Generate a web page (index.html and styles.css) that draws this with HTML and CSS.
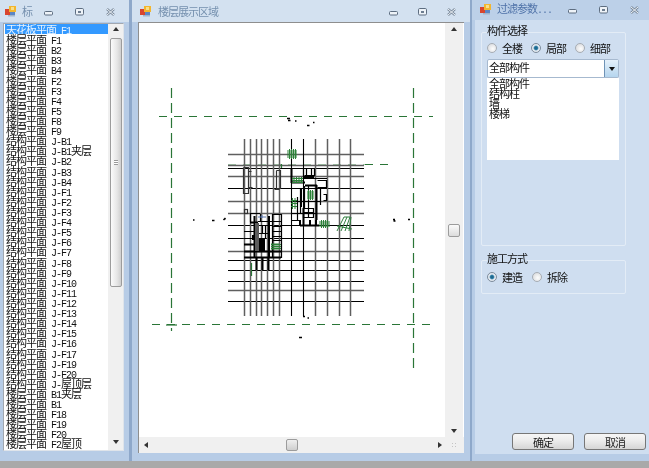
FILE: index.html
```html
<!DOCTYPE html>
<html lang="zh">
<head>
<meta charset="utf-8">
<title>楼层展示区域</title>
<link rel="stylesheet" href="styles.css">
</head>
<body>
<svg class="defs" width="0" height="0">
  <symbol id="logo" viewBox="0 0 11 11">
    <rect x="0" y="3" width="5" height="6" fill="#d8452e"/>
    <rect x="4" y="0" width="7" height="6" fill="#f3b62e"/>
    <rect x="5" y="6" width="5" height="4" fill="#5c86c4"/>
    <rect x="3" y="9" width="7" height="1.5" fill="#9fb4cc"/>
    <rect x="6" y="1" width="3" height="3" fill="#f8de8a"/>
  </symbol>
  <symbol id="min" viewBox="0 0 9 8">
    <rect x=".5" y="3.5" width="8" height="3.5" rx="1" fill="#eef3f8" stroke="#5d6d80"/>
  </symbol>
  <symbol id="max" viewBox="0 0 9 8">
    <rect x=".5" y=".5" width="8" height="6.5" rx="1.2" fill="#eef3f8" stroke="#5d6d80"/>
    <rect x="3" y="3" width="3" height="2" fill="#6d7d90"/>
  </symbol>
  <symbol id="close" viewBox="0 0 9 8">
    <path d="M1 1L8 7M8 1L1 7" stroke="#7b8a9b" stroke-width="2.4"/>
    <path d="M1 1L8 7M8 1L1 7" stroke="#eef3f8" stroke-width="1"/>
  </symbol>
</svg>
<div class="app">
  <div class="panes">
    <section class="pane pane-list">
      <header class="title">
        <svg class="logo"><use href="#logo"/></svg>
        <span class="title-text">标</span>
        <div class="winbtns">
          <svg class="wb"><use href="#min"/></svg><svg class="wb"><use href="#max"/></svg><svg class="wb"><use href="#close"/></svg>
        </div>
      </header>
      <div class="listbox">
        <div class="rows">
          <div class="row sel">天花板平面 <span class="l">F1</span></div>
          <div class="row">楼层平面 <span class="l">F1</span></div>
          <div class="row">楼层平面 <span class="l">B2</span></div>
          <div class="row">楼层平面 <span class="l">B3</span></div>
          <div class="row">楼层平面 <span class="l">B4</span></div>
          <div class="row">楼层平面 <span class="l">F2</span></div>
          <div class="row">楼层平面 <span class="l">F3</span></div>
          <div class="row">楼层平面 <span class="l">F4</span></div>
          <div class="row">楼层平面 <span class="l">F5</span></div>
          <div class="row">楼层平面 <span class="l">F8</span></div>
          <div class="row">楼层平面 <span class="l">F9</span></div>
          <div class="row">结构平面 <span class="l">J-B1</span></div>
          <div class="row">结构平面 <span class="l">J-B1</span>夹层</div>
          <div class="row">结构平面 <span class="l">J-B2</span></div>
          <div class="row">结构平面 <span class="l">J-B3</span></div>
          <div class="row">结构平面 <span class="l">J-B4</span></div>
          <div class="row">结构平面 <span class="l">J-F1</span></div>
          <div class="row">结构平面 <span class="l">J-F2</span></div>
          <div class="row">结构平面 <span class="l">J-F3</span></div>
          <div class="row">结构平面 <span class="l">J-F4</span></div>
          <div class="row">结构平面 <span class="l">J-F5</span></div>
          <div class="row">结构平面 <span class="l">J-F6</span></div>
          <div class="row">结构平面 <span class="l">J-F7</span></div>
          <div class="row">结构平面 <span class="l">J-F8</span></div>
          <div class="row">结构平面 <span class="l">J-F9</span></div>
          <div class="row">结构平面 <span class="l">J-F10</span></div>
          <div class="row">结构平面 <span class="l">J-F11</span></div>
          <div class="row">结构平面 <span class="l">J-F12</span></div>
          <div class="row">结构平面 <span class="l">J-F13</span></div>
          <div class="row">结构平面 <span class="l">J-F14</span></div>
          <div class="row">结构平面 <span class="l">J-F15</span></div>
          <div class="row">结构平面 <span class="l">J-F16</span></div>
          <div class="row">结构平面 <span class="l">J-F17</span></div>
          <div class="row">结构平面 <span class="l">J-F19</span></div>
          <div class="row">结构平面 <span class="l">J-F20</span></div>
          <div class="row">结构平面 <span class="l">J-</span>屋顶层</div>
          <div class="row">楼层平面 <span class="l">B1</span>夹层</div>
          <div class="row">楼层平面 <span class="l">B1</span></div>
          <div class="row">楼层平面 <span class="l">F18</span></div>
          <div class="row">楼层平面 <span class="l">F19</span></div>
          <div class="row">楼层平面 <span class="l">F20</span></div>
          <div class="row">楼层平面 <span class="l">F2</span>屋顶</div>
        </div>
        <div class="vscroll list-scroll">
          <i class="arrow up"></i>
          <div class="thumb list-thumb"><b class="grip"></b></div>
          <i class="arrow down"></i>
        </div>
      </div>
    </section>

    <section class="pane pane-view">
      <header class="title">
        <svg class="logo"><use href="#logo"/></svg>
        <span class="title-text">楼层展示区域</span>
        <div class="winbtns">
          <svg class="wb"><use href="#min"/></svg><svg class="wb"><use href="#max"/></svg><svg class="wb"><use href="#close"/></svg>
        </div>
      </header>
      <div class="viewer">
        <div class="viewer-main">
          <svg class="plan" viewBox="139 23 306 414" width="306" height="414">
            <path class="dash-h" d="M159 116.5H433M152 324.5H433"/>
            <path class="dash-mid" d="M228 164.500H365"/>
            <path class="dash-h" d="M365 164.500H388"/>
            <path class="dash-v" d="M171.500 88V331M413.500 88V373"/>
            <path class="plus" d="M166 325H177"/>
            <path class="gray-line" d="M228 154.500H364M228 165.500H364M228 176.500H364M228 201.500H364M228 213.500H364M228 251.500H364M228 290.500H364"/>
            <path class="black-line" d="M228 168.500H364M228 188.500H364M228 225.500H364M228 238.500H364M228 260.500H364M228 270.500H364M228 281.500H364M228 301.500H364"/>
            <path class="gray-line" d="M244.500 139V316M250.500 139V316M256.500 139V316M261.500 139V316M267.500 139V316M273.500 139V316M279.500 139V316M315.500 139V316M327.500 139V316M339.500 139V316M350.500 139V316"/>
            <path class="black-line" d="M291.500 139V316M303.500 139V316"/>

            <path class="bld-gray" d="M243.500 167.500V193.500H248.500V167.500H243.500M248.500 171.500H251.500M248.500 187.500H252.500M276.500 170.500V188.500H280.500V170.500H276.500M274.500 189.500H279.500"/>
            <rect class="bld-gray" x="244.500" y="209.500" width="3" height="4"/>

            <!-- upper-right block -->
            <path class="bld" d="M303.500 168V178M306.500 168V176M311.500 168V176M314.500 168V176M304.500 175.500H314.500M291 178.500H327M317.500 180.500H326.500V187.500H317.500M300 188.500H327M323.500 194.500H326.500V200.500H323.500M291 201.500H320M300.500 188V213M304.500 186V208M308.500 186V208M291 213.500H317M291 220.500H300M303.500 208.500H313.500V217.500H303.500V208.500M308.500 208V217M303.500 212.500H313.500M297.500 197V221M320.500 188V205"/>
            <path class="bld-heavy" d="M291.500 168V183M291 182.500H305M304 177H314M316.500 185V220M305 185.500H317M300 220V226M300 225.500H319M310 220V226M316 220V226M303.500 208V226M301 189V207"/>

            <!-- lower-left block -->
            <path class="bld" d="M250 213.500H260M272 214.500H281M260.500 214V221M272.500 214V221M258 221.500H281M262.500 225V234M258 225.500H269M258 233.500H269M265.500 225V238M272 226.500H281M272 231.500H281M272 236.500H281M272 240.500H281M281.500 214V258M272.500 221V258M244 231.500H254M244 238.500H254M250.500 214V222"/>
            <path class="bld-heavy" d="M254.500 216V257M269 216V257M244 244.500H254M244 251.500H281M244 257.500H281M256.500 257V270M262.500 257V270M268.500 257V270M250 222.500H258"/>
            <rect class="soft" x="255" y="223" width="4" height="28"/>
            <rect class="solid" x="259" y="238" width="6" height="14"/>
            <rect class="solid" x="252" y="235" width="3" height="5"/>
            <path class="soft-line" d="M262 215V218M258 217H266"/>

            <!-- green hatching -->
            <path class="hatch" d="M289.500 149V159M291.500 149V159M293.500 149V159M295.500 149V159M287 151H297M287 153H297M287 155H297M287 157H297"/>
            <path class="hatch" d="M294 177V183M296.500 177V183M299 177V183M301.500 177V183M292 178.500H303M292 180.500H303M292 182.500H303"/>
            <path class="hatch" d="M308.500 190V200M310.500 190V200M312.500 190V200M307 192H314M307 194H314M307 196H314M307 198H314"/>
            <path class="hatch" d="M292.500 198V209M295 198V209M291 200.500H297M291 203.500H297M291 206.500H297"/>
            <path class="hatch" d="M321.500 220V228M323.500 220V228M325.500 220V228M327.500 220V228M319 222H330M319 224H330M319 226H330"/>
            <path class="hatch" d="M272 243V250M274 243V250M276 243V250M278 243V250M271 244.500H281M271 246.500H281M271 248.500H281"/>
            <path class="stair" d="M337 231L344 217H350L345 231M341 231L347 217M349 231L351 217M337 226L352 229"/>
            <path class="plus" d="M251.500 263V276M281.500 164V168"/>

            <path class="dots" d="M287 118.500h3M288 120.500h2.500M295 121h1.500M307 125.500h2.500M313 122.500h1.500M193 220h1.500M212 220.500h2.500M223.500 220l2-2M224 219h1.500M393 219.500h2M393.500 221h2M408 219.500h2M303 316.500h2M307.500 318h1.500M299 337.500h3"/>
          </svg>
          <div class="vscroll view-scroll">
            <i class="arrow up"></i>
            <div class="thumb view-thumb"></div>
            <i class="arrow down"></i>
          </div>
        </div>
        <div class="viewer-foot">
          <div class="hscroll">
            <i class="arrow left"></i>
            <div class="thumb hthumb"></div>
            <i class="arrow right"></i>
          </div>
          <div class="corner"><i class="corner-grip"></i></div>
        </div>
      </div>
    </section>

    <section class="pane pane-filter">
      <header class="title">
        <svg class="logo"><use href="#logo"/></svg>
        <span class="title-text strong">过滤参数<span class="l">...</span></span>
        <div class="winbtns">
          <svg class="wb"><use href="#min"/></svg><svg class="wb"><use href="#max"/></svg><svg class="wb"><use href="#close"/></svg>
        </div>
      </header>
      <div class="form">
        <fieldset class="group group-parts">
          <legend>构件选择</legend>
          <div class="radios">
            <label class="radio"><i class="dot"></i>全楼</label>
            <label class="radio"><i class="dot on"></i>局部</label>
            <label class="radio"><i class="dot"></i>细部</label>
          </div>
          <div class="combo">
            <span class="combo-value">全部构件</span>
            <span class="combo-btn"><i class="arrow down dark"></i></span>
          </div>
          <div class="combo-list">
            <div class="opt">全部构件</div>
            <div class="opt">结构柱</div>
            <div class="opt">墙</div>
            <div class="opt">楼梯</div>
          </div>
        </fieldset>
        <fieldset class="group group-mode">
          <legend>施工方式</legend>
          <div class="radios">
            <label class="radio"><i class="dot on"></i>建造</label>
            <label class="radio"><i class="dot"></i>拆除</label>
          </div>
        </fieldset>
        <div class="actions">
          <button class="btn">确定</button>
          <button class="btn">取消</button>
        </div>
      </div>
    </section>
  </div>
  <div class="taskbar"></div>
</div>
</body>
</html>
```

FILE: styles.css
```css
* { box-sizing: border-box; }
html, body { margin: 0; padding: 0; background: #a9a9a9; }
body { width: 649px; height: 468px; overflow: hidden; }
.defs { position: absolute; }

.app {
  width: 649px;
  height: 468px;
  display: flex;
  flex-direction: column;
  font-family: "Noto Sans CJK SC", "Liberation Sans", sans-serif;
  font-size: 11px;
  letter-spacing: -1px;
  color: #111;
}
.l { font-family: "Liberation Mono", monospace; font-size: 10px; }
.row .l { margin-left: 3.5px; }
.title, .rows, .form { filter: blur(.3px); }

.panes {
  flex: 1;
  display: flex;
  min-height: 0;
  background: #8ea8ca;
  column-gap: 2px;
}
.taskbar { height: 7px; background: #a9a9a9; }

.pane { display: flex; flex-direction: column; background: #b7cce6; }
.pane-list { width: 129px; padding: 0 5px 10px 3px; }
.pane-view { width: 338px; margin-left: 1px; padding: 0 6px 8px 6px; }
.pane-filter { flex: 1; padding: 0 0 7px 3px; }

.title {
  display: flex;
  align-items: center;
  height: 22px;
  flex: none;
  background: #d3e1f0;
  margin: 0 -6px;
  padding: 0 14px 0 8px;
  color: #7590ae;
  font-size: 11px;
}
.pane-list .title { margin: 0 -5px 1px -3px; padding-left: 5px; }
.pane-filter .title { height: 20px; margin: 0 0 0 -3px; padding: 0 10px 2px 8px; background: #bcd0e8; }
.logo { width: 11px; height: 11px; flex: none; }
.title-text { margin-left: 6px; line-height: 12px; }
.pane-view .title-text { margin-left: 7px; }
.strong { color: #4f72a8; }
.winbtns { margin-left: auto; display: flex; column-gap: 22px; padding-top: 1px; }
.pane-view .winbtns { column-gap: 20px; }
.wb { width: 9px; height: 8px; display: block; }

.listbox {
  flex: 1;
  display: flex;
  min-height: 0;
  background: #fff;
  border: 1px solid #a2a8b0;
  border-right-color: #dfe4ea;
  border-bottom-color: #dfe4ea;
}
.rows { flex: 1; padding: 0 0 0 1px; min-width: 0; }
.row {
  height: 10.12px;
  line-height: 10.12px;
  padding-left: 1px;
  white-space: nowrap;
}
.row.sel { background: #3399ff; color: #e8f3ff; }

.vscroll {
  flex: none;
  display: flex;
  flex-direction: column;
  align-items: center;
  background: #f0f0f0;
}
.list-scroll { width: 15px; padding-top: 3px; }
.view-scroll { width: 18px; padding-top: 4px; }
.thumb {
  background: linear-gradient(90deg, #fbfbfb, #e6e6e6 60%, #cfcfcf);
  border: 1px solid #9c9c9c;
  border-radius: 2px;
}
.list-thumb { width: 12px; height: 249px; margin-top: 7px; display: flex; align-items: center; justify-content: center; }
.grip { width: 4px; height: 5px; border-top: 1px solid #999; border-bottom: 1px solid #999; background: linear-gradient(#fff 40%, #999 40%, #999 60%, #fff 60%); }
.view-thumb { width: 12px; height: 13px; margin-top: 193px; background: linear-gradient(#fbfbfb, #dcdcdc); }

.arrow { display: block; width: 0; height: 0; border-style: solid; border-color: transparent; flex: none; }
.arrow.up { border-width: 0 3.5px 4px; border-bottom-color: #333; }
.arrow.down { border-width: 4px 3.5px 0; border-top-color: #333; }
.arrow.left { border-width: 3.5px 4px 3.5px 0; border-right-color: #333; }
.arrow.right { border-width: 3.5px 0 3.5px 4px; border-left-color: #333; }
.vscroll .arrow.down { margin-top: auto; margin-bottom: 4px; }
.list-scroll .arrow.down { margin-bottom: 6px; }

.viewer {
  flex: 1;
  display: flex;
  flex-direction: column;
  min-height: 0;
  border-top: 1px solid #8e8e8e;
  border-left: 1px solid #8e8e8e;
  background: #fff;
}
.viewer-main { flex: 1; display: flex; min-height: 0; }
.plan { flex: none; display: block; background: #fff; filter: blur(.2px); }
.viewer-foot { display: flex; height: 16px; flex: none; background: #f0f0f0; }
.hscroll { width: 306px; display: flex; align-items: center; padding: 0 3px 0 5px; }
.hthumb { width: 12px; height: 12px; margin-left: 138px; background: linear-gradient(#efefef, #cfcfcf); }
.hscroll .arrow.right { margin-left: auto; }
.corner { flex: 1; display: flex; align-items: center; justify-content: center; }
.corner-grip {
  width: 7px;
  height: 6px;
  background: radial-gradient(circle, #c4c4c4 40%, transparent 45%) 0 0 / 3px 3px;
}

.dash-h { fill: none; stroke: #2a7537; stroke-width: 1.2; stroke-dasharray: 8 7; }
.dash-mid { fill: none; stroke: #a9cfae; stroke-width: 1; stroke-dasharray: 8 7; }
.dash-v { fill: none; stroke: #2a7537; stroke-width: 1.2; stroke-dasharray: 10 5; }
.plus { fill: none; stroke: #2a7537; stroke-width: 1.2; }
.gray-line { fill: none; stroke: #5f5f5f; stroke-width: 1.5; }
.black-line { fill: none; stroke: #000; stroke-width: 1.1; }
.bld { fill: none; stroke: #000; stroke-width: 1.2; }
.bld-heavy { fill: none; stroke: #000; stroke-width: 2; }
.bld-gray { fill: none; stroke: #333; stroke-width: 1.2; }
.solid { fill: #000; }
.soft { fill: #5c5c5c; }
.soft-line { fill: none; stroke: #5d78b0; stroke-width: 1; }
.hatch { fill: none; stroke: #2c8038; stroke-width: 1; }
.stair { fill: none; stroke: #2f7f3e; stroke-width: 1; }
.dots { fill: none; stroke: #000; stroke-width: 1.6; }

.form { flex: 1; display: flex; flex-direction: column; background: #cfdef0; padding: 0 0 0 6px; min-height: 0; }
.group {
  margin: 0;
  width: 145px;
  min-inline-size: 0;
  border: 1px solid #e3ecf6;
  border-radius: 2px;
  padding: 0 6px 0 5px;
}
.group legend { padding: 0; margin-left: 0; height: 14px; line-height: 11px; }
.group-parts { height: 221px; margin-top: 5px; }
.group-mode { height: 41px; margin-top: 7px; }
.radios { display: flex; height: 12px; margin: 3px 0 0 0; }
.group-mode .radios { margin-top: 4px; }
.radio { width: 45px; display: flex; align-items: center; white-space: nowrap; }
.dot {
  width: 10px;
  height: 10px;
  margin-right: 5px;
  border-radius: 50%;
  border: 1px solid #a7adb4;
  background: radial-gradient(circle at 60% 60%, #fdfdfd, #d3d5d8);
  flex: none;
}
.dot.on { background: radial-gradient(circle, #155a7d 0, #2d7da5 30%, #dfe6ee 50%, #eef2f6 100%); border-color: #7d8c9c; }

.combo {
  width: 132px;
  height: 19px;
  margin-top: 5px;
  display: flex;
  align-items: center;
  background: #fff;
  border: 1px solid #a6b9cf;
  border-radius: 2px;
  padding-left: 1px;
}
.combo-value { flex: 1; padding-bottom: 3px; }
.combo-btn {
  width: 14px;
  height: 17px;
  display: flex;
  align-items: center;
  justify-content: center;
  background: linear-gradient(#e4f0fa, #b5d5ee);
  border-left: 1px solid #6f93b6;
}
.arrow.dark { border-width: 4px 3.5px 0; border-top-color: #111; }
.combo-list { width: 132px; height: 82px; background: #fff; padding-left: 2px; }
.opt { height: 10px; line-height: 10px; }

.actions { margin-top: auto; display: flex; justify-content: flex-end; column-gap: 10px; padding: 0 3px 4px 0; }
.btn {
  width: 62px;
  height: 17px;
  padding: 0 0 1px;
  font: inherit;
  letter-spacing: -1px;
  color: #1c1c1c;
  background: linear-gradient(#f6f6f6, #ececec 45%, #d6d6d6);
  border: 1px solid #777;
  border-radius: 3px;
}
```
